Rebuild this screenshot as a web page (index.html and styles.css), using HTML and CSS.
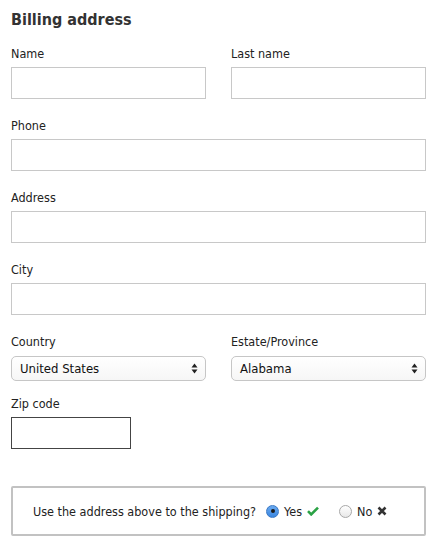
FILE: index.html
```html
<!DOCTYPE html>
<html>
<head>
<meta charset="utf-8">
<link rel="stylesheet" href="styles.css">
</head>
<body>
<form class="billing">
  <h2 class="title">Billing address</h2>
  <div class="row two">
    <div class="field">
      <label class="label">Name</label>
      <input class="input" type="text">
    </div>
    <div class="field">
      <label class="label">Last name</label>
      <input class="input" type="text">
    </div>
  </div>
  <div class="row">
    <div class="field">
      <label class="label">Phone</label>
      <input class="input" type="text">
    </div>
  </div>
  <div class="row">
    <div class="field">
      <label class="label">Address</label>
      <input class="input" type="text">
    </div>
  </div>
  <div class="row">
    <div class="field">
      <label class="label">City</label>
      <input class="input" type="text">
    </div>
  </div>
  <div class="row two row-select">
    <div class="field">
      <label class="label">Country</label>
      <div class="select"><span>United States</span><svg class="arrows" width="7" height="11" viewBox="0 0 7 11"><path d="M3.5 0.5 L6.5 4.5 H0.5 Z M3.5 10.5 L6.5 6.5 H0.5 Z" fill="#222"/></svg></div>
    </div>
    <div class="field">
      <label class="label">Estate/Province</label>
      <div class="select"><span>Alabama</span><svg class="arrows" width="7" height="11" viewBox="0 0 7 11"><path d="M3.5 0.5 L6.5 4.5 H0.5 Z M3.5 10.5 L6.5 6.5 H0.5 Z" fill="#222"/></svg></div>
    </div>
  </div>
  <div class="row">
    <div class="field zip">
      <label class="label">Zip code</label>
      <input class="input input-dark" type="text">
    </div>
  </div>
  <div class="shipping">
    <span class="question">Use the address above to the shipping?</span>
    <label class="option"><span class="radio checked"></span>Yes<svg class="icon" width="12" height="10" viewBox="0 0 12 10"><path d="M1 5.2 L4.2 8.4 L11 1.6" fill="none" stroke="#2aa245" stroke-width="2.6"/></svg></label>
    <label class="option no"><span class="radio"></span>No<svg class="icon" width="10" height="10" viewBox="0 0 10 10"><path d="M1.5 1.5 L8.5 8.5 M8.5 1.5 L1.5 8.5" fill="none" stroke="#333" stroke-width="2.6"/></svg></label>
  </div>
</form>
</body>
</html>
```
FILE: styles.css
```css
html, body {
  margin: 0;
  padding: 0;
  background: #fff;
}
body {
  font-family: "DejaVu Sans Condensed", "DejaVu Sans", sans-serif;
  font-size: 12.5px;
  color: #222;
}
.billing {
  padding: 10px 9px 0 11px;
  width: 415px;
}
.title {
  margin: 0 0 15px 0;
  font-size: 16px;
  line-height: 20px;
  font-weight: bold;
  color: #333;
}
.row {
  display: flex;
  gap: 25px;
  margin-bottom: 18px;
}
.row .field {
  flex: 1;
  min-width: 0;
  display: flex;
  flex-direction: column;
}
.row .field.zip {
  flex: 0 0 120px;
}
.row-select {
  margin-bottom: 14px;
}
.label {
  display: block;
  box-sizing: border-box;
  height: 16px;
  padding-top: 1px;
  line-height: 16px;
  margin-bottom: 6px;
}
.input {
  box-sizing: border-box;
  width: 100%;
  min-width: 0;
  height: 32px;
  border: 1px solid #c8c8c8;
  margin: 0;
  padding: 0 8px;
  background: #fff;
  outline: none;
}
.input-dark {
  border-color: #444;
}
.select {
  box-sizing: border-box;
  height: 25px;
  margin-top: 1px;
  border: 1px solid #c6c6c6;
  border-radius: 5px;
  background: linear-gradient(#fff, #f6f6f6);
  display: flex;
  align-items: center;
  justify-content: space-between;
  padding: 0 7px 0 8px;
  color: #111;
  font-size: 13px;
}
.shipping {
  margin-top: 37px;
  box-sizing: border-box;
  height: 50px;
  border: 2px solid #c2c2c2;
  border-radius: 2px;
  display: flex;
  align-items: center;
  padding-left: 20px;
  color: #222;
}
.question {
  margin-right: 10px;
}
.option {
  display: flex;
  align-items: center;
}
.option.no {
  margin-left: 20px;
}
.radio {
  box-sizing: border-box;
  width: 13px;
  height: 13px;
  border-radius: 50%;
  border: 1px solid #a8a8a8;
  background: linear-gradient(#fff, #e8e8e8);
  margin-right: 5px;
  position: relative;
}
.radio.checked {
  border-color: #3a78c4;
  background: linear-gradient(#6aaaf0, #3a86e0);
}
.radio.checked::after {
  content: "";
  position: absolute;
  left: 3.5px;
  top: 3.5px;
  width: 4px;
  height: 4px;
  border-radius: 50%;
  background: #1a1a1a;
}
.icon {
  margin-left: 5px;
}
```
